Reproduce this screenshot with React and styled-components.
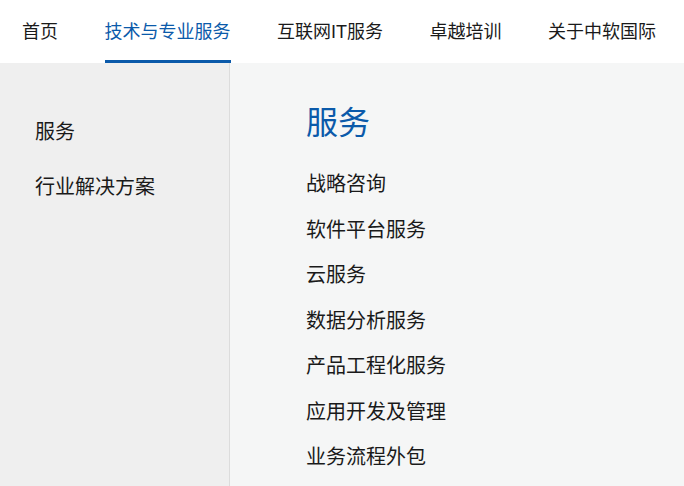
import React from 'react';
import styled, { createGlobalStyle } from 'styled-components';

const GlobalStyle = createGlobalStyle`
  html, body {
    margin: 0;
    padding: 0;
    background: #ffffff;
  }
  body {
    font-family: "Liberation Sans", "Noto Sans CJK SC", sans-serif;
    color: #222;
  }
`;

const Page = styled.div`
  width: 684px;
  height: 486px;
  display: flex;
  flex-direction: column;
  overflow: hidden;
`;

const NavBar = styled.nav`
  height: 63px;
  display: flex;
  align-items: stretch;
  gap: 46.5px;
  padding-left: 22px;
  background: #fff;
  flex-shrink: 0;
`;

const NavItem = styled.a`
  display: flex;
  align-items: center;
  font-size: 18px;
  color: ${(p) => (p.$active ? '#0b5aaa' : '#1a1a1a')};
  white-space: nowrap;
  text-decoration: none;
  padding-top: 1px;
  padding-bottom: 2px;
  border-bottom: 3px solid ${(p) => (p.$active ? '#0b5aaa' : 'transparent')};
  box-sizing: border-box;
  cursor: pointer;
`;

const Body = styled.div`
  flex: 1;
  display: flex;
`;

const Sidebar = styled.aside`
  width: 230px;
  flex-shrink: 0;
  background: #efefef;
  border-right: 1px solid #dcdcdc;
  padding: 42px 0 0 35px;
  box-sizing: border-box;
`;

const SideItem = styled.div`
  font-size: 20px;
  line-height: 55px;
  color: #1a1a1a;
  cursor: pointer;
`;

const Content = styled.main`
  flex: 1;
  background: #f5f6f6;
  padding: 40px 0 0 76px;
`;

const Title = styled.h2`
  margin: 0 0 19px;
  font-size: 32px;
  font-weight: normal;
  line-height: 40px;
  color: #0b5aaa;
`;

const ServiceList = styled.ul`
  list-style: none;
  margin: 0;
  padding: 0;
`;

const ServiceItem = styled.li`
  font-size: 20px;
  line-height: 45.5px;
  color: #1a1a1a;
  cursor: pointer;
`;

const navItems = ['首页', '技术与专业服务', '互联网IT服务', '卓越培训', '关于中软国际'];
const sideItems = ['服务', '行业解决方案'];
const services = [
  '战略咨询',
  '软件平台服务',
  '云服务',
  '数据分析服务',
  '产品工程化服务',
  '应用开发及管理',
  '业务流程外包',
];

export default function App() {
  return (
    <>
      <GlobalStyle />
      <Page>
        <NavBar>
          {navItems.map((item) => (
            <NavItem key={item} $active={item === '技术与专业服务'}>
              {item}
            </NavItem>
          ))}
        </NavBar>
        <Body>
          <Sidebar>
            {sideItems.map((item) => (
              <SideItem key={item}>{item}</SideItem>
            ))}
          </Sidebar>
          <Content>
            <Title>服务</Title>
            <ServiceList>
              {services.map((s) => (
                <ServiceItem key={s}>{s}</ServiceItem>
              ))}
            </ServiceList>
          </Content>
        </Body>
      </Page>
    </>
  );
}
